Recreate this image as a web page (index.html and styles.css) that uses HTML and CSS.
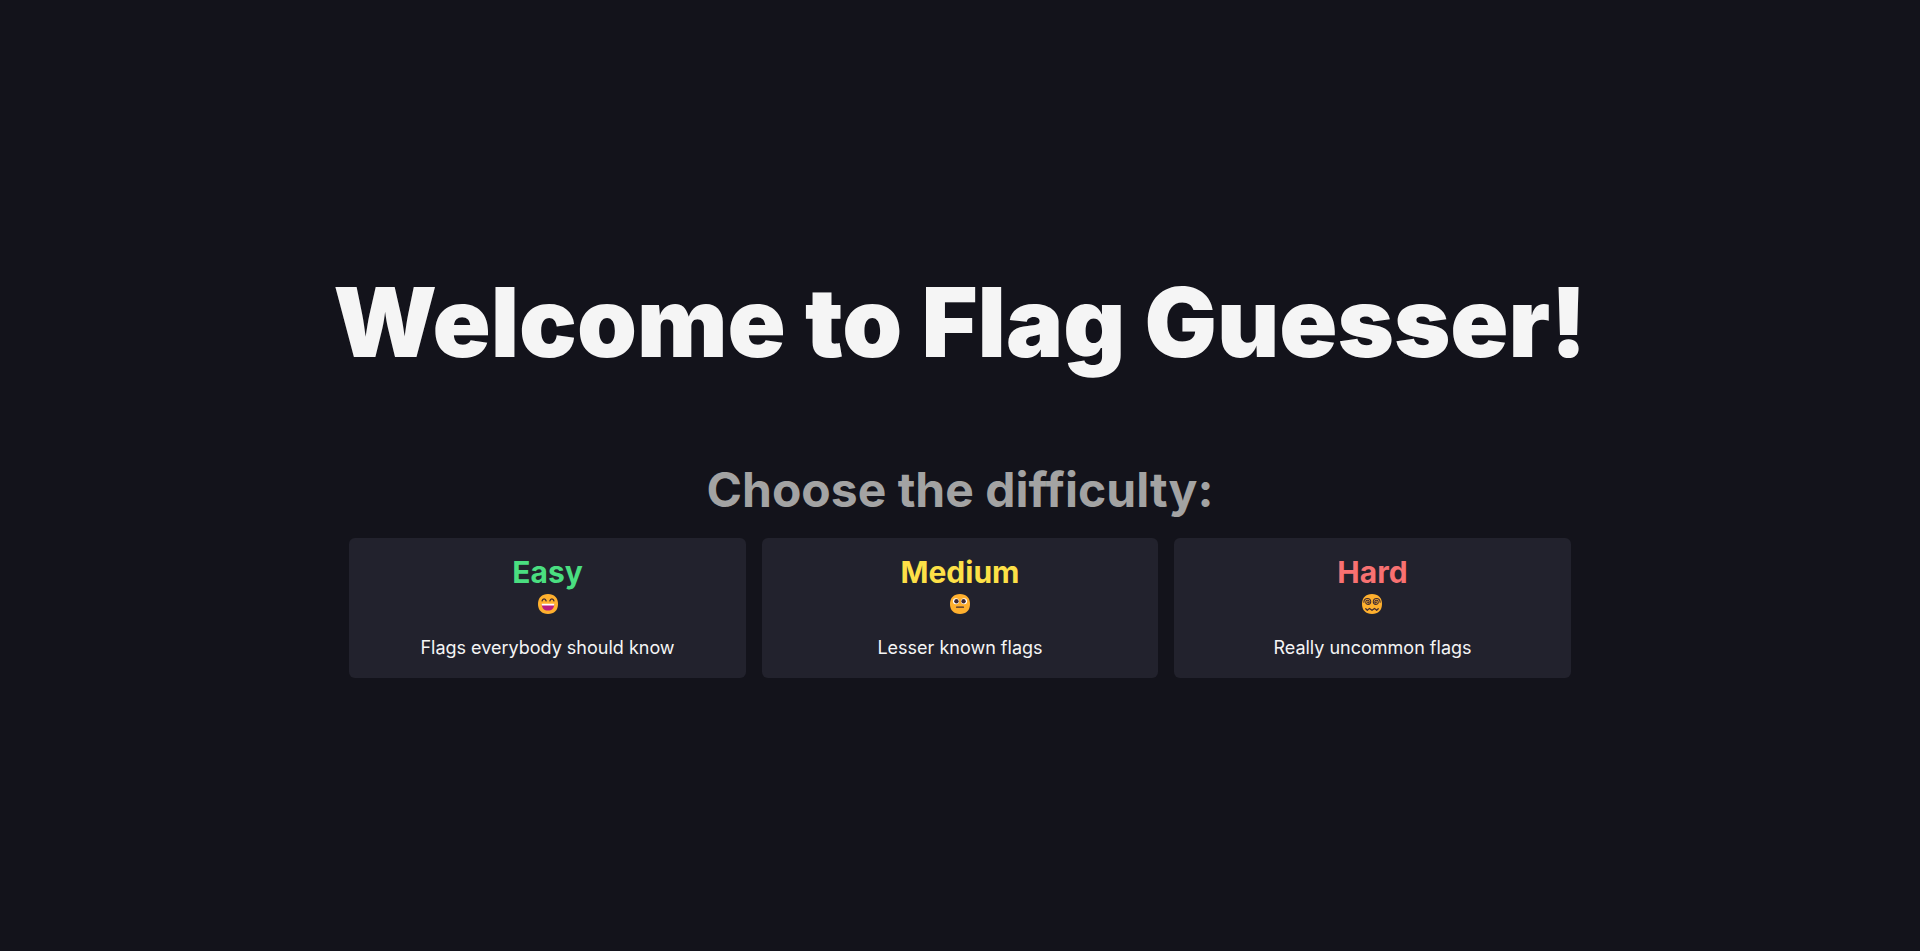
FILE: index.html
```html
<!DOCTYPE html>
<html lang="en">
<head>
  <meta charset="utf-8">
  <meta name="viewport" content="width=device-width, initial-scale=1">
  <title>Flag Guesser</title>
  <link rel="stylesheet" href="styles.css">
</head>
<body>
  <main class="welcome">
    <h1 class="title">Welcome to Flag Guesser!</h1>
    <section class="chooser" aria-labelledby="chooser-title">
      <h2 class="chooser-title" id="chooser-title">Choose the difficulty:</h2>
      <div class="levels">
        <button class="level" type="button">
          <span class="level-name easy">Easy</span>
          <span class="level-face">
            <svg class="face" viewBox="0 0 32 32" aria-hidden="true">
              <path fill="#ffb02e" d="M16 0C26 0 32 6 32 16S26 32 16 32 0 26 0 16 6 0 16 0Z"/>
              <path fill="none" stroke="#402a32" stroke-width="2" stroke-linecap="round" d="M6.500 11c1-4.500 5.500-4.500 6.500 0M19 11c1-4.500 5.500-4.500 6.500 0"/>
              <path fill="#bb1d80" d="M6 16h20c0 7-4 10.500-10 10.500S6 23 6 16Z"/>
              <path fill="#fff" d="M6 15.500h20v1.500a1.500 1.500 0 0 1-1.500 1.500h-17A1.500 1.500 0 0 1 6 17Z"/>
            </svg>
          </span>
          <span class="level-text">Flags everybody should know</span>
        </button>
        <button class="level" type="button">
          <span class="level-name medium">Medium</span>
          <span class="level-face">
            <svg class="face" viewBox="0 0 32 32" aria-hidden="true">
              <path fill="#ffb02e" d="M16 0C26 0 32 6 32 16S26 32 16 32 0 26 0 16 6 0 16 0Z"/>
              <circle cx="9.500" cy="11.500" r="4.800" fill="#fff"/>
              <circle cx="22.500" cy="11.500" r="4.800" fill="#fff"/>
              <circle cx="10.300" cy="11.500" r="3.500" fill="#402a32"/>
              <circle cx="21.700" cy="11.500" r="3.500" fill="#402a32"/>
              <path stroke="#402a32" stroke-width="2" stroke-linecap="round" d="M10.500 21h11"/>
            </svg>
          </span>
          <span class="level-text">Lesser known flags</span>
        </button>
        <button class="level" type="button">
          <span class="level-name hard">Hard</span>
          <span class="level-face">
            <svg class="face" viewBox="0 0 32 32" aria-hidden="true">
              <path fill="#ffb02e" d="M16 0C26 0 32 6 32 16S26 32 16 32 0 26 0 16 6 0 16 0Z"/>
              <g fill="none" stroke="#402a32" stroke-width="1.700" stroke-linecap="round" stroke-linejoin="round">
                <path d="M3 13C3 5 14 6 14 12.500C14 18 6 18 6 13C6 9 11.500 9.500 11.500 12.500C11.500 15 8.700 14.500 9 12.700"/>
                <path d="M29 13C29 5 18 6 18 12.500C18 18 26 18 26 13C26 9 20.500 9.500 20.500 12.500C20.500 15 23.300 14.500 23 12.700"/>
                <path stroke-width="2" d="M6 23.500l2.500 2.500 3.500-3 4 3 4-3 3.500 3 2.500-2.500"/>
              </g>
            </svg>
          </span>
          <span class="level-text">Really uncommon flags</span>
        </button>
      </div>
    </section>
  </main>
</body>
</html>
```
FILE: styles.css
```css
* {
  box-sizing: border-box;
}

body {
  margin: 0;
  min-height: 100vh;
  display: flex;
  align-items: center;
  justify-content: center;
  background: #13131b;
  color: #f5f5f5;
  font-family: Inter, "Liberation Sans", sans-serif;
  text-align: center;
}

.welcome {
  display: flex;
  flex-direction: column;
  gap: 96px;
}

.title {
  margin: 0;
  font-size: 96px;
  font-weight: 900;
  line-height: 96px;
}

.chooser {
  display: flex;
  flex-direction: column;
  gap: 24px;
  padding: 0 16px;
}

.chooser-title {
  margin: 0;
  color: #a3a3a3;
  font-size: 48px;
  font-weight: 700;
  line-height: 48px;
}

.levels {
  display: grid;
  grid-template-columns: repeat(3, minmax(0, 1fr));
  gap: 16px;
}

.level {
  display: flex;
  flex-direction: column;
  align-items: center;
  padding: 16px;
  border: 0;
  border-radius: 6px;
  background: #22222d;
  color: #f5f5f5;
  font-family: inherit;
  font-size: 18px;
  line-height: 28px;
  cursor: pointer;
}

.level-name {
  font-size: 30px;
  font-weight: 700;
  line-height: 36px;
}

.easy {
  color: #4ade80;
}

.medium {
  color: #fde047;
}

.hard {
  color: #f87171;
}

.level-face {
  display: flex;
  align-items: center;
  height: 28px;
  margin-bottom: 16px;
}

.face {
  width: 20px;
  height: 20px;
}

@media (max-width: 1280px) {
  .title {
    font-size: 48px;
    line-height: 48px;
  }

  .chooser-title {
    font-size: 30px;
    line-height: 36px;
  }
}
```
